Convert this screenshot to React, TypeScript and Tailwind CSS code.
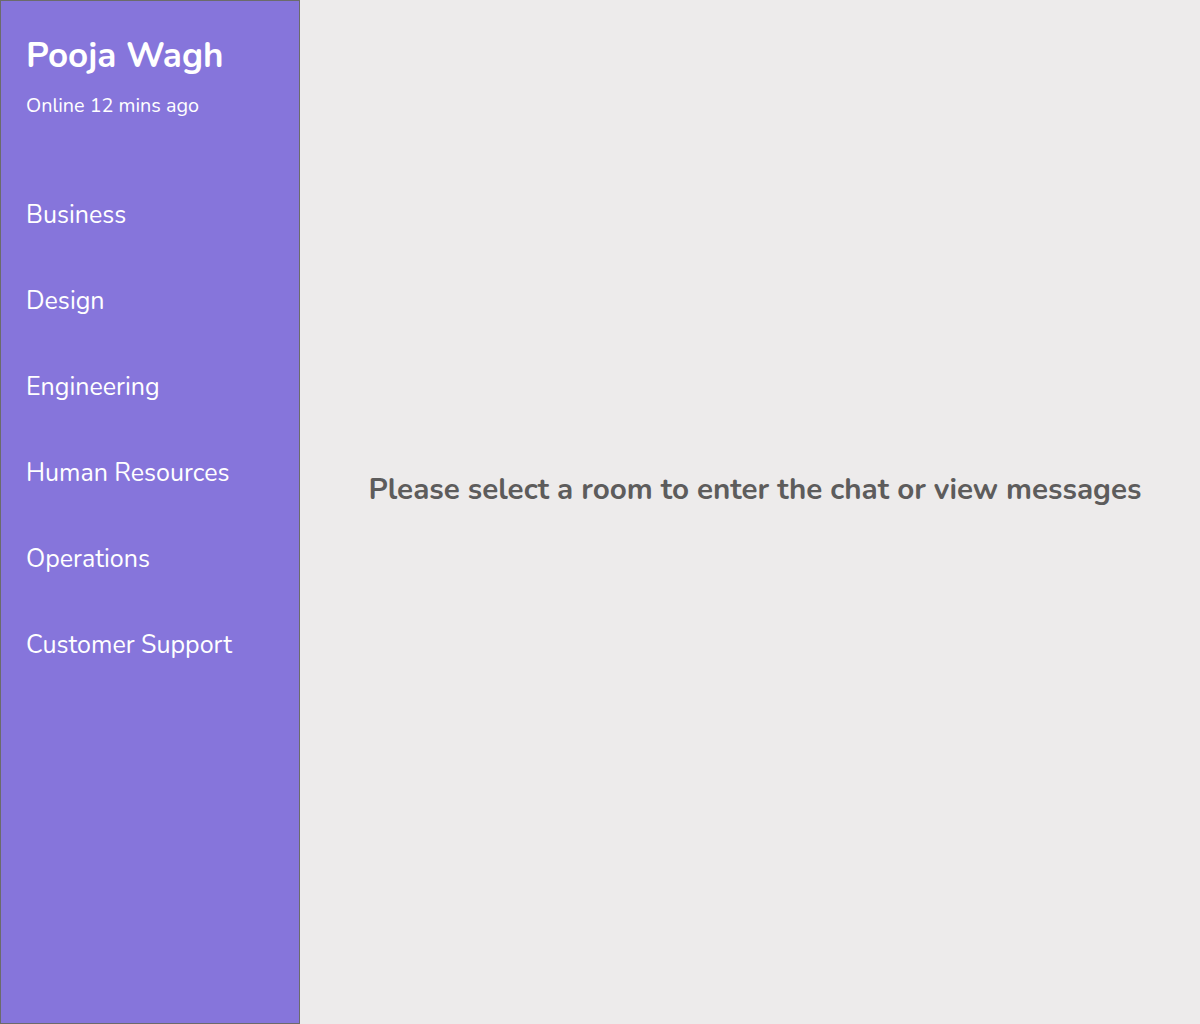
import React from 'react';

const rooms = ['Business', 'Design', 'Engineering', 'Human Resources', 'Operations', 'Customer Support'];

export default function App() {
  return (
    <div className="flex h-[1024px] w-[1200px] bg-[#edebeb] font-['Nunito','Lato',sans-serif]">
      <aside className="flex w-[300px] shrink-0 flex-col border border-[#6b6b6b] bg-[#8675db] text-white">
        <div className="px-[25px] pt-[33px]">
          <h1 className="text-[35px] font-bold leading-[44px]">Pooja Wagh</h1>
          <p className="mt-[16px] text-[19.8px] leading-[24px]">Online 12 mins ago</p>
        </div>
        <ul className="mt-[81px] flex flex-col px-[25px]">
          {rooms.map((room) => (
            <li key={room} className="h-[86px] text-[25px] leading-[32px]">
              {room}
            </li>
          ))}
        </ul>
      </aside>
      <main className="flex flex-1 items-center justify-center pb-[46px] pl-[10px]">
        <p className="text-[29.6px] font-bold text-[#5d5c5c]">Please select a room to enter the chat or view messages</p>
      </main>
    </div>
  );
}
